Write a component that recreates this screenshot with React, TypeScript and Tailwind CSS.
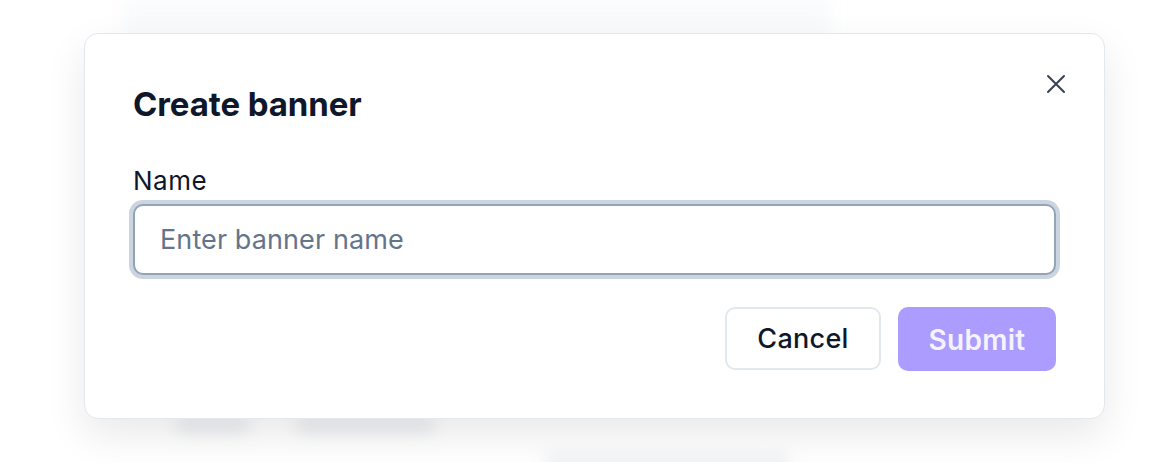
import React from "react";

export default function App() {
  return (
    <div
      className="relative w-[1176px] h-[462px] overflow-hidden bg-white"
      style={{ fontFamily: "Inter, 'Liberation Sans', sans-serif" }}
    >
      {/* blurred background content behind the dialog */}
      <div className="absolute inset-0 blur-[8px]">
        <div className="absolute left-[124px] top-0 w-[706px] h-[60px] bg-[#f8fafc]" />
        <div className="absolute left-[175px] top-[416px] w-[75px] h-[18px] rounded-md bg-[#eceef1]" />
        <div className="absolute left-[295px] top-[416px] w-[140px] h-[18px] rounded-md bg-[#eceef1]" />
        <div className="absolute left-[545px] top-[452px] w-[245px] h-[20px] rounded-md bg-[#f1f2f4]" />
      </div>

      <div className="relative flex pl-[84px] pt-[33px]">
        <div className="relative w-[1021px] h-[386px] rounded-[14px] border border-[#e2e8f0] bg-white px-[48px] pt-[50px] shadow-[0_16px_40px_rgba(0,0,0,0.09)] flex flex-col">
          <button className="absolute right-[38px] top-[40px] w-[20px] h-[20px] flex items-center justify-center text-[#374151]">
            <svg width="20" height="20" viewBox="0 0 20 20" fill="none" stroke="currentColor" strokeWidth="2" strokeLinecap="round">
              <path d="M2 2 L18 18 M18 2 L2 18" />
            </svg>
          </button>

          <h2 className="text-[33px] leading-[40px] font-bold tracking-[-0.1px] text-[#0f172a]">
            Create banner
          </h2>

          <label className="mt-[41px] text-[26px] leading-[32px] font-normal tracking-[0.5px] text-[#0f172a]">
            Name
          </label>

          <input
            placeholder="Enter banner name"
            className="mt-[7px] h-[71px] w-full rounded-[10px] border-2 border-[#94a3b8] bg-white px-[25px] text-[27px] tracking-[0.1px] text-[#0f172a] placeholder:text-[#64748b] outline-none ring-[4px] ring-[#cbd5e1]"
          />

          <div className="mt-[32px] flex justify-end gap-[17px]">
            <button className="w-[156px] h-[63px] rounded-[10px] border-2 border-[#e2e8f0] bg-white pt-[2px] text-[27px] font-medium tracking-[0.3px] text-[#0f172a]">
              Cancel
            </button>
            <button className="w-[158px] h-[64px] rounded-[10px] bg-[#ab9cfd] pt-[2px] text-[28px] font-semibold tracking-[0.3px] text-[#f5f3ff]">
              Submit
            </button>
          </div>
        </div>
      </div>
    </div>
  );
}
